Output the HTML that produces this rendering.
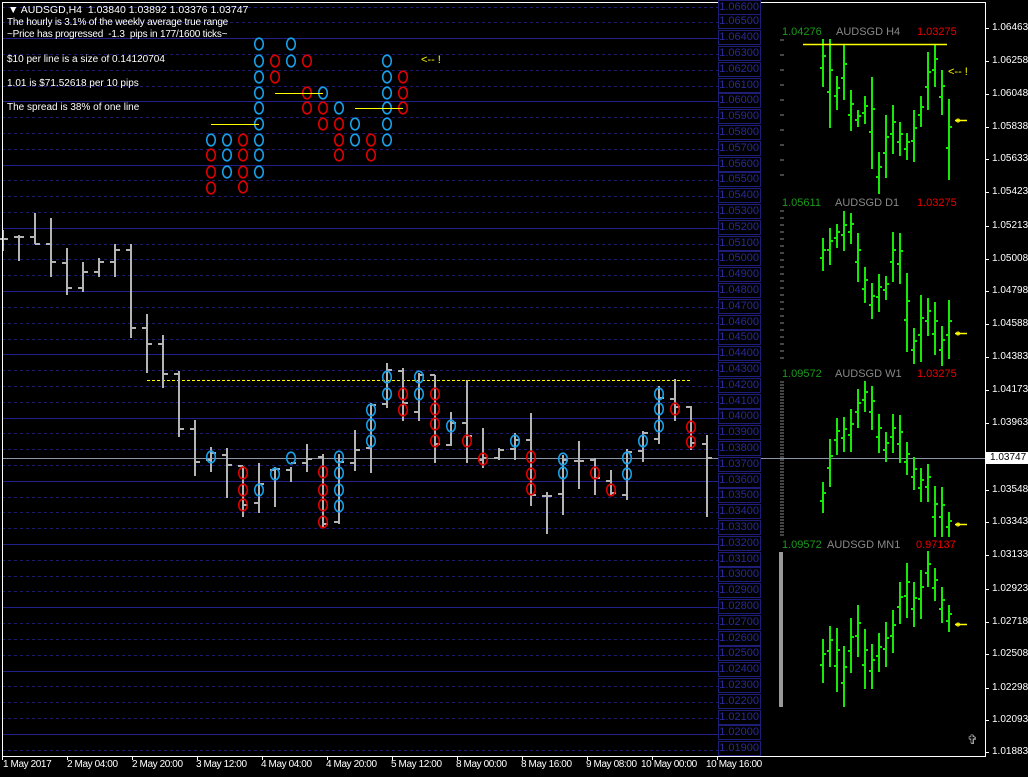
<!DOCTYPE html>
<html><head><meta charset="utf-8">
<style>
html,body{margin:0;padding:0;background:#000;}
body{width:1028px;height:777px;overflow:hidden;position:relative;font-family:"Liberation Sans",Arial,sans-serif;}
svg{position:absolute;left:0;top:0;}
.t{position:absolute;color:#fff;font-size:10px;white-space:nowrap;line-height:12px;}
.pl{position:absolute;left:718px;border:1px solid #1e1e78;color:#2a2a9a;font-size:11px;line-height:13px;text-align:right;padding-right:1px;box-sizing:border-box;width:43px;height:15px;background:#000;}
.ra{position:absolute;left:992px;color:#fff;font-size:10px;line-height:12px;}
.dt{position:absolute;top:759px;color:#fff;font-size:10px;line-height:12px;letter-spacing:-0.4px;white-space:nowrap;}
.pn{position:absolute;font-size:11px;line-height:12px;}
</style></head><body>
<svg id="s" width="1028" height="777" xmlns="http://www.w3.org/2000/svg"></svg>

<div class="t" style="left:8px;top:4px;font-size:10.5px">&#9660; AUDSGD,H4&nbsp; 1.03840 1.03892 1.03376 1.03747</div>
<div class="t" style="left:7px;top:17px;letter-spacing:-0.2px">The hourly is 3.1% of the weekly average true range</div>
<div class="t" style="left:7px;top:29px;letter-spacing:-0.2px">~Price has progressed&nbsp; -1.3&nbsp; pips in 177/1600 ticks~</div>
<div class="t" style="left:7px;top:54px">$10 per line is a size of 0.14120704</div>
<div class="t" style="left:7px;top:78px">1.01 is $71.52618 per 10 pips</div>
<div class="t" style="left:7px;top:102px">The spread is 38% of one line</div>
<div class="t" style="left:421px;top:54px;color:#ff0;font-size:11px">&lt;-- !</div>

<div class="pl" style="top:0px">1.06600</div><div class="pl" style="top:14px">1.06500</div><div class="pl" style="top:30px">1.06400</div><div class="pl" style="top:46px">1.06300</div><div class="pl" style="top:62px">1.06200</div><div class="pl" style="top:78px">1.06100</div><div class="pl" style="top:93px">1.06000</div><div class="pl" style="top:109px">1.05900</div><div class="pl" style="top:125px">1.05800</div><div class="pl" style="top:141px">1.05700</div><div class="pl" style="top:157px">1.05600</div><div class="pl" style="top:172px">1.05500</div><div class="pl" style="top:188px">1.05400</div><div class="pl" style="top:204px">1.05300</div><div class="pl" style="top:220px">1.05200</div><div class="pl" style="top:236px">1.05100</div><div class="pl" style="top:251px">1.05000</div><div class="pl" style="top:267px">1.04900</div><div class="pl" style="top:283px">1.04800</div><div class="pl" style="top:299px">1.04700</div><div class="pl" style="top:315px">1.04600</div><div class="pl" style="top:330px">1.04500</div><div class="pl" style="top:346px">1.04400</div><div class="pl" style="top:362px">1.04300</div><div class="pl" style="top:378px">1.04200</div><div class="pl" style="top:394px">1.04100</div><div class="pl" style="top:409px">1.04000</div><div class="pl" style="top:425px">1.03900</div><div class="pl" style="top:441px">1.03800</div><div class="pl" style="top:457px">1.03700</div><div class="pl" style="top:473px">1.03600</div><div class="pl" style="top:488px">1.03500</div><div class="pl" style="top:504px">1.03400</div><div class="pl" style="top:520px">1.03300</div><div class="pl" style="top:536px">1.03200</div><div class="pl" style="top:552px">1.03100</div><div class="pl" style="top:567px">1.03000</div><div class="pl" style="top:583px">1.02900</div><div class="pl" style="top:599px">1.02800</div><div class="pl" style="top:615px">1.02700</div><div class="pl" style="top:631px">1.02600</div><div class="pl" style="top:646px">1.02500</div><div class="pl" style="top:662px">1.02400</div><div class="pl" style="top:678px">1.02300</div><div class="pl" style="top:694px">1.02200</div><div class="pl" style="top:710px">1.02100</div><div class="pl" style="top:725px">1.02000</div><div class="pl" style="top:741px">1.01900</div>

<div class="pn" style="left:782px;top:26px;color:#1a9a1a">1.04276</div><div class="pn" style="left:836px;top:26px;color:#888">AUDSGD H4</div><div class="pn" style="left:917px;top:26px;color:#e00">1.03275</div>
<div class="pn" style="left:782px;top:197px;color:#1a9a1a">1.05611</div><div class="pn" style="left:835px;top:197px;color:#888">AUDSGD D1</div><div class="pn" style="left:917px;top:197px;color:#e00">1.03275</div>
<div class="pn" style="left:782px;top:368px;color:#1a9a1a">1.09572</div><div class="pn" style="left:835px;top:368px;color:#888">AUDSGD W1</div><div class="pn" style="left:917px;top:368px;color:#e00">1.03275</div>
<div class="pn" style="left:782px;top:539px;color:#1a9a1a">1.09572</div><div class="pn" style="left:827px;top:539px;color:#888">AUDSGD MN1</div><div class="pn" style="left:916px;top:539px;color:#e00">0.97137</div>

<div class="ra" style="top:22px">1.06463</div><div class="ra" style="top:55px">1.06258</div><div class="ra" style="top:88px">1.06048</div><div class="ra" style="top:121px">1.05838</div><div class="ra" style="top:153px">1.05633</div><div class="ra" style="top:186px">1.05423</div><div class="ra" style="top:220px">1.05213</div><div class="ra" style="top:253px">1.05008</div><div class="ra" style="top:285px">1.04798</div><div class="ra" style="top:318px">1.04588</div><div class="ra" style="top:351px">1.04383</div><div class="ra" style="top:384px">1.04173</div><div class="ra" style="top:417px">1.03963</div>
<div class="ra" style="top:452px;left:986px;background:#fff;color:#000;padding:0 3px 0 4px">1.03747</div>
<div class="ra" style="top:484px">1.03548</div><div class="ra" style="top:516px">1.03343</div><div class="ra" style="top:549px">1.03133</div><div class="ra" style="top:583px">1.02923</div><div class="ra" style="top:616px">1.02718</div><div class="ra" style="top:648px">1.02508</div><div class="ra" style="top:682px">1.02298</div><div class="ra" style="top:714px">1.02093</div><div class="ra" style="top:746px">1.01883</div>

<div class="dt" style="left:3px">1 May 2017</div><div class="dt" style="left:67px">2 May 04:00</div><div class="dt" style="left:132px">2 May 20:00</div><div class="dt" style="left:196px">3 May 12:00</div><div class="dt" style="left:261px">4 May 04:00</div><div class="dt" style="left:326px">4 May 20:00</div><div class="dt" style="left:391px">5 May 12:00</div><div class="dt" style="left:456px">8 May 00:00</div><div class="dt" style="left:521px">8 May 16:00</div><div class="dt" style="left:586px">9 May 08:00</div><div class="dt" style="left:641px">10 May 00:00</div><div class="dt" style="left:706px">10 May 16:00</div>
<div class="t" style="left:967px;top:734px;color:#aaa;font-size:13px">&#10014;</div>

<script>
var s=document.getElementById('s'),h='';
function L(x1,y1,x2,y2,c,w,d){h+='<line x1="'+x1+'" y1="'+y1+'" x2="'+x2+'" y2="'+y2+'" stroke="'+c+'" stroke-width="'+(w||1)+'"'+(d?' stroke-dasharray="'+d+'"':'')+'/>';}
for(var i=0;i<48;i++){var y=Math.round(6.5+i*15.81)+0.5;var p=66-i;var solid=((64-p)%4===0);L(2,y,718,y,solid?'#20208a':'#1c1c6a',1,solid?null:'3,3');}
L(2,458.5,985,458.5,'#8a96a8',1);
L(147,380.5,690,380.5,'#ff0',1,'3,2');
var B=[[3,230,251,239,239],[19,235,261,237,237],[35,213,244,237,244],[51,218,277,244,262],[67,248,295,263,288],[83,262,292,288,272],[99,258,277,272,262],[115,244,277,262,250],[131,244,338,250,328],[147,314,373,328,344],[163,335,388,344,374],[179,371,437,374,429],[195,420,476,429,462],[211,447,472,460,453],[227,448,498,455,465],[243,466,517,466,505],[259,463,513,503,484],[275,467,507,470,469],[291,467,482,470,463],[307,444,472,463,459],[323,454,528,457,524],[339,454,524,522,462],[355,430,471,463,450],[371,403,473,448,405],[387,363,408,404,370],[403,368,421,371,403],[419,373,421,412,375],[435,375,463,375,444],[451,412,446,445,423],[467,380,463,423,436],[483,428,468,460,458],[499,448,460,458,450],[515,433,460,449,440],[531,413,506,440,495],[547,492,534,496,496],[563,455,515,494,460],[579,441,489,461,461],[595,458,495,460,478],[611,470,496,481,493],[627,449,500,495,452],[643,431,462,451,433],[659,386,444,439,398],[675,379,421,399,407],[691,406,450,407,443],[707,435,517,444,458]];
B.forEach(function(b){L(b[0],b[1],b[0],b[2],'#b4b4b4',2);L(b[0]-5,b[3],b[0],b[3],'#b4b4b4',2);L(b[0],b[4],b[0]+5,b[4],'#b4b4b4',2);});
var BL='#1aa0e8',RD='#e00000';
function C(x,y,c){h+='<ellipse cx="'+x+'" cy="'+y+'" rx="4.3" ry="5.8" fill="none" stroke="'+c+'" stroke-width="1.6"/>';}
[44,61,77,93,108,124,140,155,172].forEach(function(y){C(259,y,BL)});
C(275,61,RD);C(275,77,RD);C(291,44,BL);C(291,61,BL);
C(307,61,RD);C(307,93,RD);C(307,108,RD);
C(323,93,BL);C(323,124,RD);C(339,108,BL);C(339,124,RD);C(339,140,RD);C(339,155,RD);
C(355,124,BL);C(355,140,BL);C(371,140,RD);C(371,155,RD);C(323,108,RD);
[61,77,93,108,124,140].forEach(function(y){C(387,y,BL)});
C(403,77,RD);C(403,93,RD);C(403,108,RD);
C(211,140,BL);C(211,155,RD);C(211,172,RD);C(211,188,RD);
C(227,140,BL);C(227,155,BL);C(227,172,BL);
C(243,140,RD);C(243,155,RD);C(243,172,RD);C(243,187,RD);
L(275,93.5,323,93.5,'#ff0',1);L(355,108.5,403,108.5,'#ff0',1);L(211,124.5,259,124.5,'#ff0',1);
var M=[[211,457,BL],[243,473,RD],[243,490,RD],[243,505,RD],[259,490,BL],[275,474,BL],[291,458,BL],[323,472,RD],[323,490,RD],[323,505,RD],[323,522,RD],[339,457,BL],[339,473,BL],[339,490,BL],[339,506,BL],[371,410,BL],[371,425,BL],[371,441,BL],[387,377,BL],[387,394,BL],[403,394,RD],[403,410,RD],[419,377,BL],[419,394,BL],[435,394,RD],[435,409,RD],[435,424,RD],[435,441,RD],[451,426,BL],[467,441,RD],[483,459,RD],[515,441,BL],[531,457,RD],[531,474,RD],[531,489,RD],[563,459,BL],[563,473,BL],[595,473,RD],[611,490,RD],[627,458,BL],[627,474,BL],[643,441,BL],[659,394,BL],[659,409,BL],[659,426,BL],[675,409,RD],[691,427,RD],[691,442,RD]];
M.forEach(function(m){C(m[0],m[1],m[2])});
var G='#18e808';
function P(arr){arr.forEach(function(b){L(b[0],b[1],b[0],b[2],G,2);var o=b[1]+(b[2]-b[1])*0.6,c=b[1]+(b[2]-b[1])*0.35;L(b[0]-3,Math.round(o),b[0],Math.round(o),G,2);L(b[0],Math.round(c),b[0]+3,Math.round(c),G,2);});}
var xs=[823,830,837,844,851,858,865,872,879,886,893,900,907,914,921,928,935,942,949];
function mk(r){return r.map(function(v,i){return [xs[i],v[0],v[1]]});}
P(mk([[39,87],[39,128],[76,110],[44,100],[90,131],[110,127],[96,124],[77,169],[152,194],[115,178],[105,154],[122,156],[133,160],[110,162],[96,127],[52,110],[44,87],[70,115],[99,180]]));
P(mk([[238,271],[228,265],[224,248],[211,251],[213,244],[233,282],[267,303],[283,319],[274,312],[276,300],[232,282],[233,284],[273,352],[328,364],[295,362],[298,336],[302,355],[326,366],[300,359]]));
P(mk([[482,513],[439,487],[418,455],[417,452],[409,452],[389,428],[381,412],[386,430],[414,453],[432,462],[414,453],[415,463],[442,475],[457,490],[468,502],[464,502],[486,537],[487,537],[512,537]]));
P(mk([[639,683],[626,667],[628,692],[646,707],[618,673],[605,657],[629,689],[644,689],[633,672],[622,667],[610,653],[582,624],[563,618],[582,627],[570,619],[551,587],[568,601],[587,623],[605,632]]));
L(803,44.5,947,44.5,'#ff0',1.5);
[120,333,524,624].forEach(function(y){L(955,y+0.5,967,y+0.5,'#ff0',1.5);h+='<circle cx="958" cy="'+(y+0.5)+'" r="1.5" fill="none" stroke="#ff0"/>';});
h+='<text x="948" y="75" fill="#ff0" font-size="11" font-family="Liberation Sans">&lt;-- !</text>';
for(var y=40;y<190;y+=15)L(780,y,784,y,'#888',1);
for(var y=211;y<365;y+=7)L(780,y,784,y,'#888',1);
for(var y=382;y<537;y+=3)L(780,y,784,y,'#888',1);
h+='<rect x="779" y="552" width="4" height="155" fill="#999"/>';
L(2,2.5,985,2.5,'#fff',1);L(2.5,2,2.5,756,'#fff',1);L(2,756.5,985,756.5,'#fff',1);L(985.5,2,985.5,757,'#fff',1);
[28,61,94,127,159,192,226,259,291,324,357,390,423,490,522,555,589,622,654,688,720,752].forEach(function(y){L(985,y+0.5,989,y+0.5,'#fff',1)});
for(var x=2;x<720;x+=65)L(x+0.5,756,x+0.5,760,'#fff',1);
s.innerHTML=h;
</script>
</body></html>
